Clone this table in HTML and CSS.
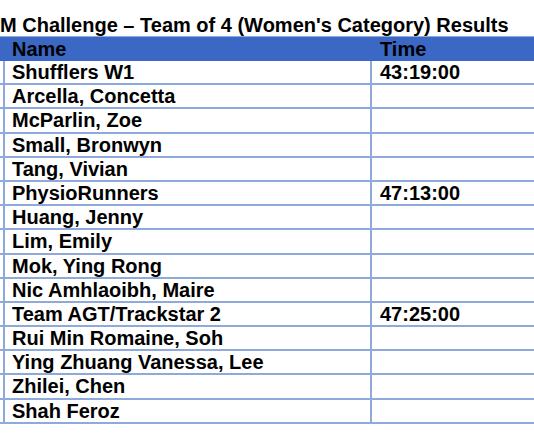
FILE: index.html
```html
<!DOCTYPE html>
<html>
<head>
<meta charset="utf-8">
<link rel="stylesheet" href="styles.css">
</head>
<body>
<div class="page">
  <h1 class="title">M Challenge – Team of 4 (Women's Category) Results</h1>
  <div class="sheet">
    <div class="row head"><div class="stub"></div><div class="name">Name</div><div class="time">Time</div></div>
    <div class="row"><div class="stub"></div><div class="name">Shufflers W1</div><div class="time">43:19:00</div></div>
    <div class="row"><div class="stub"></div><div class="name">Arcella, Concetta</div><div class="time"></div></div>
    <div class="row"><div class="stub"></div><div class="name">McParlin, Zoe</div><div class="time"></div></div>
    <div class="row"><div class="stub"></div><div class="name">Small, Bronwyn</div><div class="time"></div></div>
    <div class="row"><div class="stub"></div><div class="name">Tang, Vivian</div><div class="time"></div></div>
    <div class="row"><div class="stub"></div><div class="name">PhysioRunners</div><div class="time">47:13:00</div></div>
    <div class="row"><div class="stub"></div><div class="name">Huang, Jenny</div><div class="time"></div></div>
    <div class="row"><div class="stub"></div><div class="name">Lim, Emily</div><div class="time"></div></div>
    <div class="row"><div class="stub"></div><div class="name">Mok, Ying Rong</div><div class="time"></div></div>
    <div class="row"><div class="stub"></div><div class="name">Nic Amhlaoibh, Maire</div><div class="time"></div></div>
    <div class="row"><div class="stub"></div><div class="name">Team AGT/Trackstar 2</div><div class="time">47:25:00</div></div>
    <div class="row"><div class="stub"></div><div class="name">Rui Min Romaine, Soh</div><div class="time"></div></div>
    <div class="row"><div class="stub"></div><div class="name">Ying Zhuang Vanessa, Lee</div><div class="time"></div></div>
    <div class="row"><div class="stub"></div><div class="name">Zhilei, Chen</div><div class="time"></div></div>
    <div class="row"><div class="stub"></div><div class="name">Shah Feroz</div><div class="time"></div></div>
  </div>
</div>
</body>
</html>
```
FILE: styles.css
```css
html, body {
  margin: 0;
  padding: 0;
  background: #ffffff;
  overflow: hidden;
}
.page {
  width: 534px;
  height: 443px;
  overflow: hidden;
  font-family: "Liberation Sans", Arial, sans-serif;
  font-weight: bold;
  font-size: 20px;
  color: #000000;
}
.title {
  margin: 0;
  padding-top: 14px;
  font-size: 20px;
  line-height: 22px;
  white-space: nowrap;
  width: 620px;
  border-bottom: 1px solid #8fabdd;
}
.sheet {
  width: 620px;
}
.row {
  display: flex;
  box-sizing: border-box;
  height: 24.2px;
  line-height: 22px;
  border-bottom: 2px solid #8eaadc;
  white-space: nowrap;
}
.row.head {
  height: 24px;
  line-height: 24px;
  background: #3b67c5;
  border-bottom: none;
}
.stub {
  width: 3px;
  flex: none;
}
.name {
  flex: none;
  box-sizing: border-box;
  width: 367px;
  padding-left: 7px;
  border-left: 2px solid #8eaadc;
}
.time {
  flex: 1;
  padding-left: 8px;
  border-left: 2px solid #8eaadc;
}
.head .name,
.head .time {
  border-left-color: #3b67c5;
}
```
